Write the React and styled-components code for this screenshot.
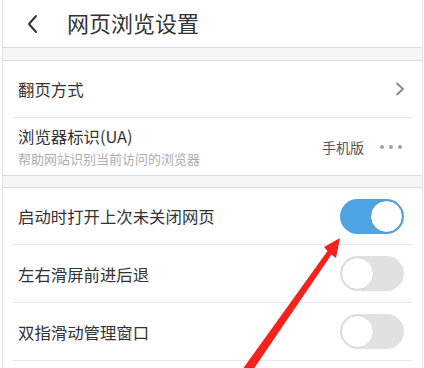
import React from "react";
import styled, { createGlobalStyle } from "styled-components";

const Global = createGlobalStyle`
  html, body {
    margin: 0;
    padding: 0;
    background: #ffffff;
  }
  body {
    font-family: "Noto Sans CJK SC", "Noto Sans", sans-serif;
    color: #333333;
  }
`;

const Page = styled.div`
  position: relative;
  width: 419px;
  height: 368px;
  margin-left: 2px;
  border-left: 1px solid #e4e4e4;
  border-right: 1px solid #e4e4e4;
  overflow: hidden;
  background: #ffffff;
`;

const Header = styled.div`
  display: flex;
  align-items: center;
  height: 48px;
  border-bottom: 1px solid #dcdcdc;
  box-sizing: border-box;
`;

const Back = styled.div`
  width: 64px;
  display: flex;
  justify-content: flex-start;
  padding-left: 23px;
  box-sizing: border-box;
`;

const Title = styled.h1`
  margin: 0;
  font-size: 22px;
  font-weight: 400;
  color: #333333;
  line-height: 1;
  padding-bottom: 4px;
`;

const Gap = styled.div`
  height: ${(p) => p.h}px;
  background: #f6f6f6;
  border-bottom: 1px solid #dcdcdc;
  border-top: ${(p) => (p.top ? "1px solid #dcdcdc" : "none")};
  box-sizing: border-box;
`;

const Section = styled.div`
  background: #ffffff;
`;

const Row = styled.div`
  display: flex;
  align-items: center;
  height: ${(p) => p.h || 57}px;
  margin: 0 10px 0 10px;
  padding: 0 4px 0 5px;
  box-sizing: border-box;
  border-bottom: ${(p) => (p.last ? "none" : "1px solid #e8e8e8")};
`;

const Texts = styled.div`
  flex: 1;
  display: flex;
  flex-direction: column;
`;

const Label = styled.div`
  font-size: 16.4px;
  line-height: 20px;
  color: #333333;
`;

const Sub = styled.div`
  font-size: 13px;
  line-height: 16px;
  margin-top: 5px;
  color: #adadad;
`;

const Value = styled.div`
  font-size: 14px;
  color: #555555;
  margin-right: 16px;
`;

const Dots = styled.div`
  display: flex;
  gap: 5px;
  margin-right: 6px;
  span {
    width: 4px;
    height: 4px;
    border-radius: 50%;
    background: #a0a0a0;
  }
`;

const Track = styled.div`
  position: relative;
  width: 64px;
  height: 35px;
  margin-right: 4px;
  border-radius: 18px;
  background: ${(p) => (p.on ? "#4ea3e3" : "#e1e1e1")};
  box-sizing: border-box;
`;

const Knob = styled.div`
  position: absolute;
  top: 1px;
  ${(p) => (p.on ? "right: 1px;" : "left: 1px;")}
  width: 33px;
  height: 33px;
  border-radius: 50%;
  background: #ffffff;
  box-sizing: border-box;
  border: 1px solid ${(p) => (p.on ? "#3d8fd0" : "#d4d4d4")};
`;

const Arrow = styled.svg`
  position: absolute;
  left: -3px;
  top: 0;
  pointer-events: none;
`;

const ChevronIcon = styled.svg`
  margin-right: 3px;
`;

const Toggle = ({ on }) => (
  <Track on={on ? 1 : 0}>
    <Knob on={on ? 1 : 0} />
  </Track>
);

const Chevron = () => (
  <ChevronIcon width="10" height="14" viewBox="0 0 10 14">
    <polyline
      points="2,1.5 8,7 2,12.5"
      fill="none"
      stroke="#888888"
      strokeWidth="1.8"
      strokeLinecap="round"
      strokeLinejoin="round"
    />
  </ChevronIcon>
);

export default function App() {
  return (
    <>
      <Global />
      <Page>
        <Header>
          <Back>
            <svg width="14" height="20" viewBox="0 0 14 20">
              <polyline
                points="10,2 3,10 10,18"
                fill="none"
                stroke="#333333"
                strokeWidth="2"
                strokeLinecap="round"
                strokeLinejoin="round"
              />
            </svg>
          </Back>
          <Title>网页浏览设置</Title>
        </Header>
        <Gap h={13} />
        <Section>
          <Row h={57}>
            <Texts>
              <Label>翻页方式</Label>
            </Texts>
            <Chevron />
          </Row>
          <Row h={57} last>
            <Texts>
              <Label>浏览器标识(UA)</Label>
              <Sub>帮助网站识别当前访问的浏览器</Sub>
            </Texts>
            <Value>手机版</Value>
            <Dots>
              <span />
              <span />
              <span />
            </Dots>
          </Row>
        </Section>
        <Gap h={13} top />
        <Section>
          <Row h={57}>
            <Texts>
              <Label>启动时打开上次未关闭网页</Label>
            </Texts>
            <Toggle on />
          </Row>
          <Row h={58}>
            <Texts>
              <Label>左右滑屏前进后退</Label>
            </Texts>
            <Toggle />
          </Row>
          <Row h={58}>
            <Texts>
              <Label>双指滑动管理窗口</Label>
            </Texts>
            <Toggle />
          </Row>
        </Section>
        <Arrow width="424" height="368" viewBox="0 0 424 368">
          <polygon
            points="340,238 336,258 331.5,254.5 253,370 242,370 327.5,251 324,247"
            fill="#f3221c"
          />
        </Arrow>
      </Page>
    </>
  );
}
